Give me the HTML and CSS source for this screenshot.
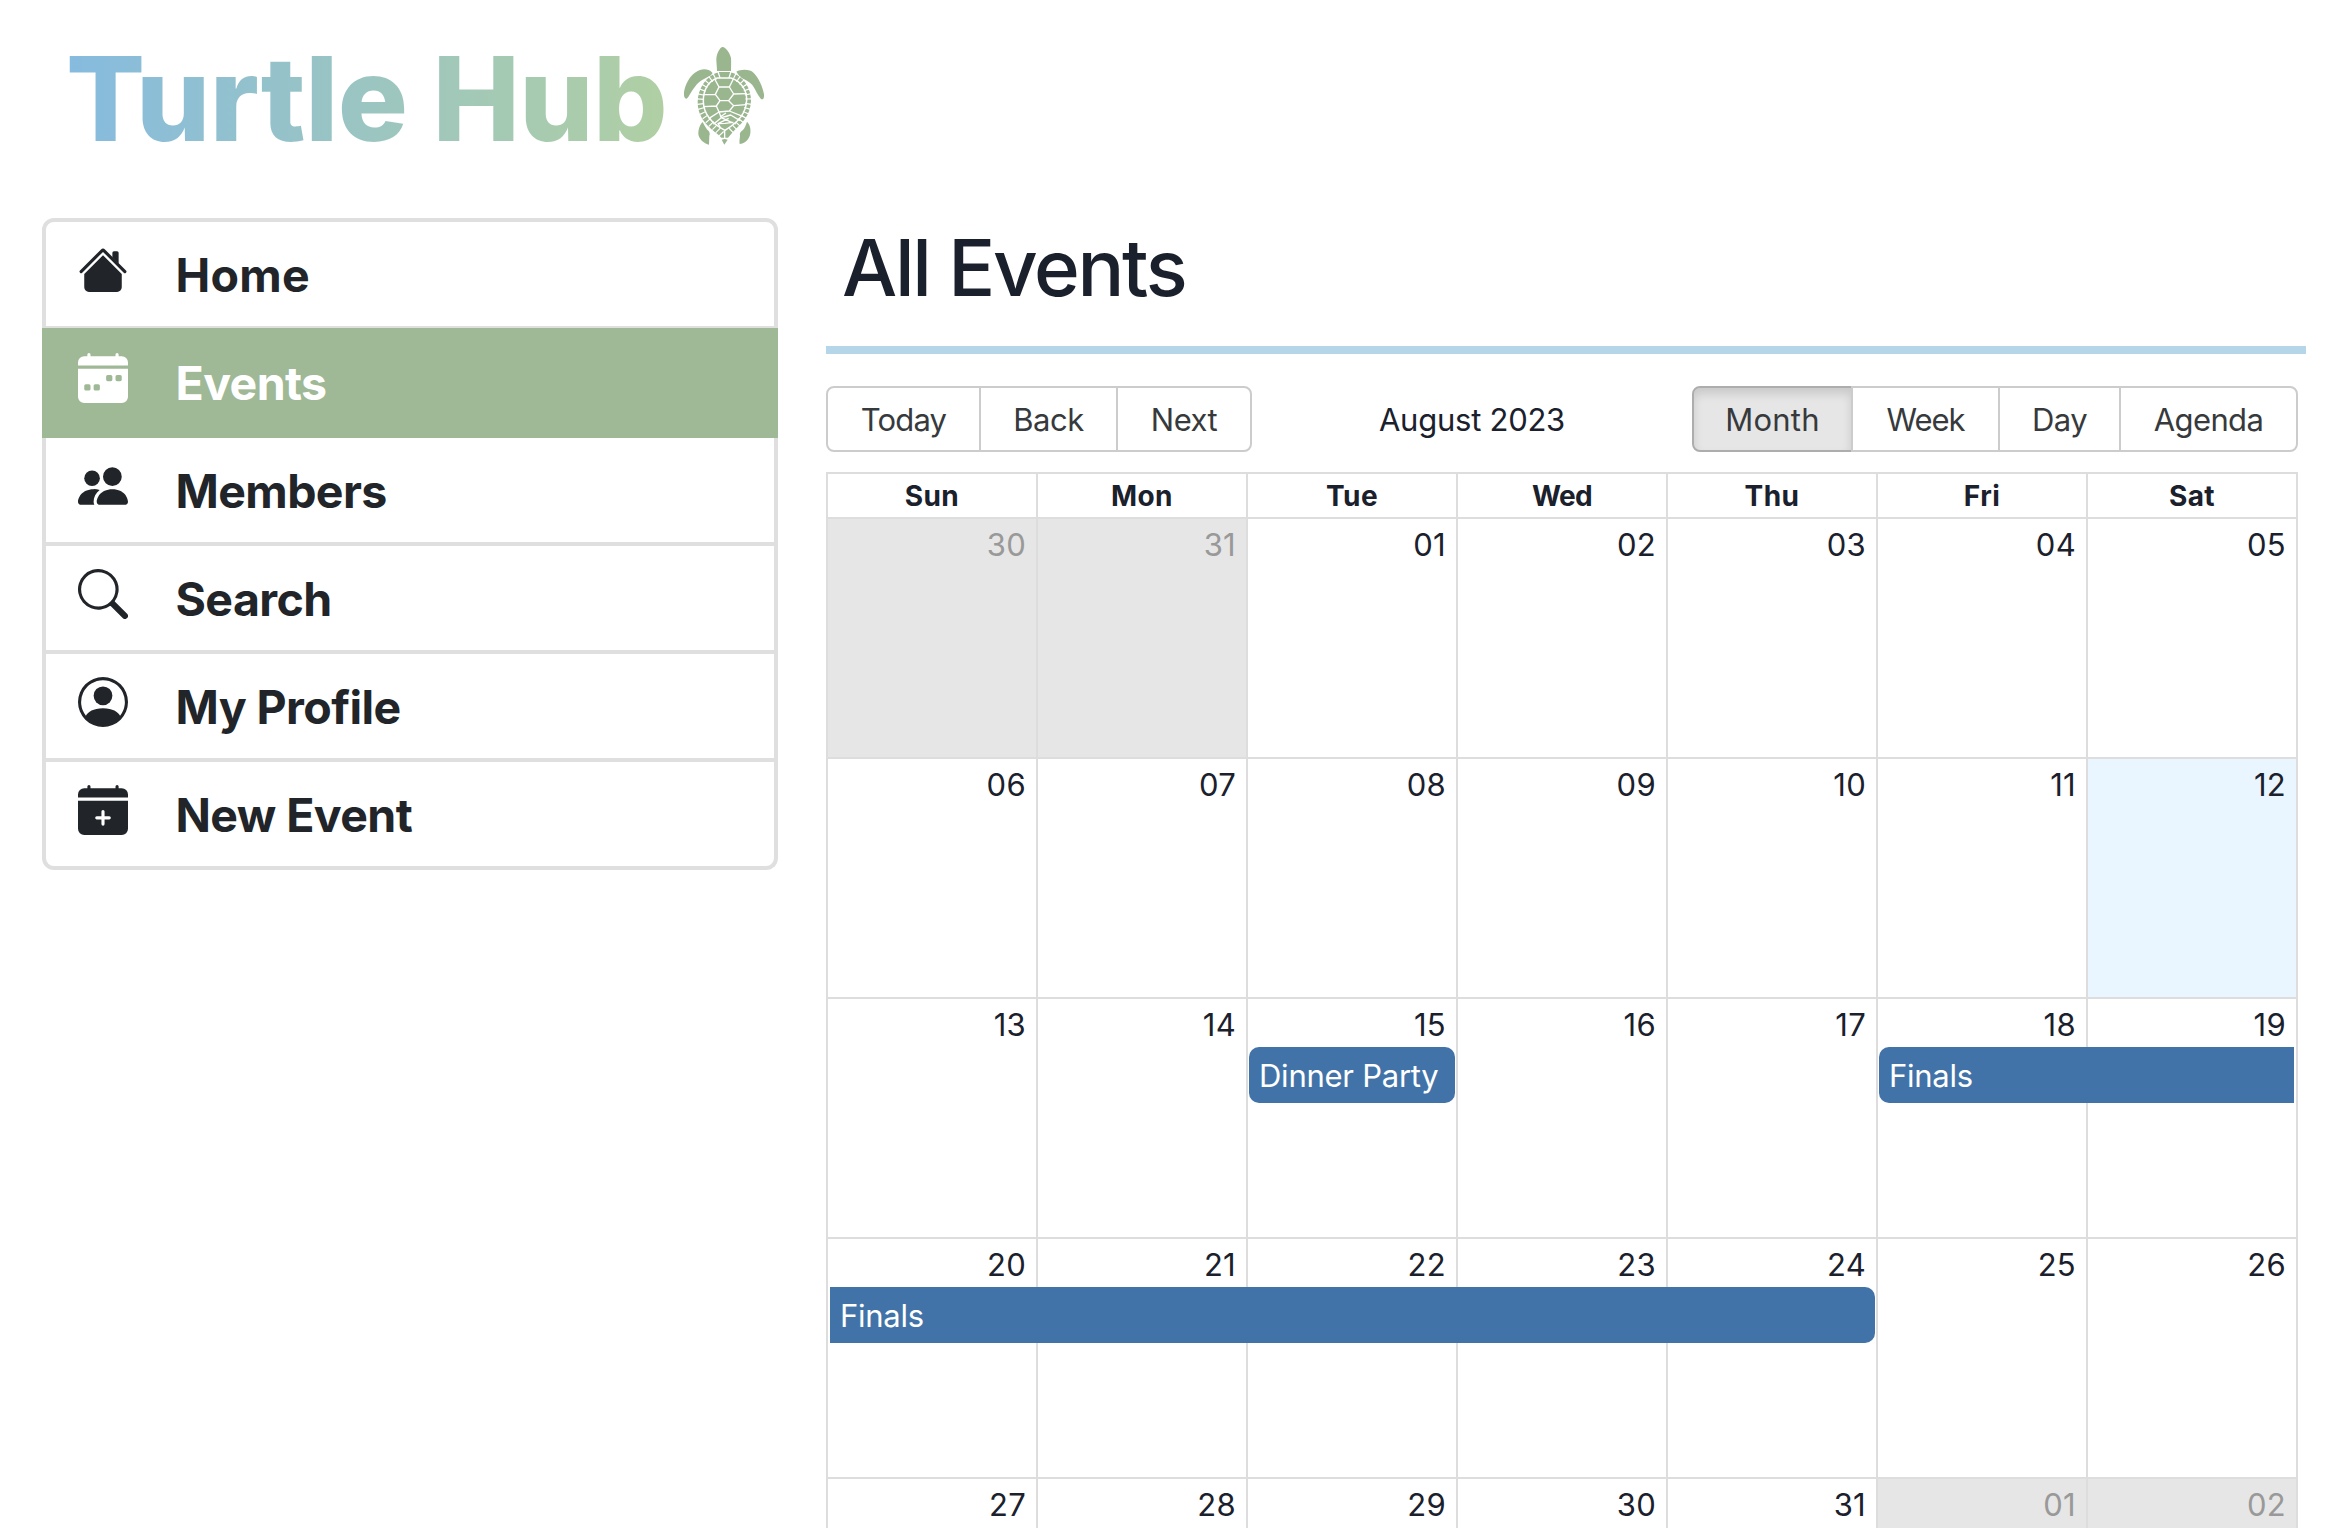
FILE: index.html
```
<!DOCTYPE html>
<html lang="en">
<head>
<meta charset="utf-8">
<title>Turtle Hub</title>
<link rel="stylesheet" href="styles.css">
</head>
<body>
<header class="header">
  <span class="logo-text">Turtle Hub</span>
  <svg class="logo-turtle" viewBox="42 36 240 294" fill="currentColor">
    <path d="M158 36C150 36 140 56 139 72c0 13 2 23 2 36h42c0-13 1-23 0-38-2-15-17-34-25-34z"/>
    <path d="M127 113c-13-13-33-13-50-1-17 10-32 38-35 60-1 13 2 19 7 19 6-1 13-21 26-36 13-17 30-25 43-31 6-4 10-8 9-11z"/>
    <path d="M199 110c13-7 41-9 53 5 14 15 26 40 30 63 1 14-4 17-9 14-11-12-15-27-26-42-12-14-25-16-37-25-5-6-8-11-11-15z"/>
    <path d="M98 261c-10 9-15 29-12 41 4 13 18 23 31 27l1-27c3-4 0-12-2-14-8-6-12-16-18-27z"/>
    <path d="M231 260c9 8 13 25 9 40-5 18-18 25-31 27-2-9 1-19 1-25-2-7 2-12 8-16 7-6 10-18 13-26z"/>
    <path d="M147 111H180C222 123 243 160 243 198C241 243 214 266 192 287L174 308H154L145 299C118 277 83 252 83 200C84 160 108 122 147 111z"/>
    <path d="M155 314l9-2 9 2-10 15z"/>
    <g fill="none" stroke="#fff" stroke-linejoin="round">
      <path stroke-width="20" stroke-dasharray="3.5 10.5" d="M149 119C110 131 91 162 91 200C92 245 125 265 158 301"/>
      <path stroke-width="20" stroke-dasharray="3.5 10.5" d="M178 119C218 131 237 162 236 198C233 243 208 264 177 294"/>
      <path stroke-width="4.5" d="M142 129H183C212 138 231 165 230 195C228 235 207 260 165 286C125 265 101 240 100 200C99 165 115 138 142 129z"/>
      <path stroke-width="4" d="M164 286V312M134 132L147 156H178L190 132M147 156L136 178L150 197H176L191 177L178 156M136 178L100 179M191 177L230 176M150 197L139 213L147 231L178 228L191 212L176 197M139 213L101 215M191 212L229 209M147 231L116 251M178 228L220 245M147 231L154 248L182 240M154 248L130 268M168 234L150 246M166 246L182 240L210 257M154 248L180 260L198 267M176 250L144 266L165 265L190 262M144 266L152 279"/>
    </g>
  </svg>
</header>
<div class="layout">
  <nav class="sidebar">
    <a class="nav-item nav-home"><svg class="icon" viewBox="0 0 16 16" fill="currentColor"><path fill-rule="evenodd" d="m8 3.293 6 6V13.5a1.5 1.5 0 0 1-1.5 1.5h-9A1.5 1.5 0 0 1 2 13.5V9.293l6-6zm5-.793V6l-2-2V2.5a.5.5 0 0 1 .5-.5h1a.5.5 0 0 1 .5.5z"/><path fill-rule="evenodd" d="M7.293 1.5a1 1 0 0 1 1.414 0l6.647 6.646a.5.5 0 0 1-.708.708L8 2.207 1.354 8.854a.5.5 0 1 1-.708-.708L7.293 1.5z"/></svg><span>Home</span></a>
    <a class="nav-item active"><svg class="icon" viewBox="0 0 16 16" fill="currentColor"><path d="M4 .5a.5.5 0 0 0-1 0V1H2a2 2 0 0 0-2 2v1h16V3a2 2 0 0 0-2-2h-1V.5a.5.5 0 0 0-1 0V1H4V.5zM16 14V5H0v9a2 2 0 0 0 2 2h12a2 2 0 0 0 2-2zM9.5 7h1a.5.5 0 0 1 .5.5v1a.5.5 0 0 1-.5.5h-1a.5.5 0 0 1-.5-.5v-1a.5.5 0 0 1 .5-.5zm3 0h1a.5.5 0 0 1 .5.5v1a.5.5 0 0 1-.5.5h-1a.5.5 0 0 1-.5-.5v-1a.5.5 0 0 1 .5-.5zM2 10.5a.5.5 0 0 1 .5-.5h1a.5.5 0 0 1 .5.5v1a.5.5 0 0 1-.5.5h-1a.5.5 0 0 1-.5-.5v-1zm3.5-.5h1a.5.5 0 0 1 .5.5v1a.5.5 0 0 1-.5.5h-1a.5.5 0 0 1-.5-.5v-1a.5.5 0 0 1 .5-.5z"/></svg><span>Events</span></a>
    <a class="nav-item"><svg class="icon" viewBox="0 0 16 16" fill="currentColor"><path d="M7 14s-1 0-1-1 1-4 5-4 5 3 5 4-1 1-1 1H7zm4-6a3 3 0 1 0 0-6 3 3 0 0 0 0 6z"/><path fill-rule="evenodd" d="M5.216 14A2.238 2.238 0 0 1 5 13c0-1.355.68-2.75 1.936-3.72A6.325 6.325 0 0 0 5 9c-4 0-5 3-5 4s1 1 1 1h4.216z"/><path d="M4.5 8a2.5 2.5 0 1 0 0-5 2.5 2.5 0 0 0 0 5z"/></svg><span>Members</span></a>
    <a class="nav-item"><svg class="icon" viewBox="0 0 16 16" fill="currentColor"><path d="M11.742 10.344a6.5 6.5 0 1 0-1.397 1.398h-.001c.03.04.062.078.098.115l3.85 3.85a1 1 0 0 0 1.415-1.414l-3.85-3.85a1.007 1.007 0 0 0-.115-.1zM12 6.5a5.5 5.5 0 1 1-11 0 5.5 5.5 0 0 1 11 0z"/></svg><span>Search</span></a>
    <a class="nav-item"><svg class="icon" viewBox="0 0 16 16" fill="currentColor"><path d="M11 6a3 3 0 1 1-6 0 3 3 0 0 1 6 0z"/><path fill-rule="evenodd" d="M0 8a8 8 0 1 1 16 0A8 8 0 0 1 0 8zm8-7a7 7 0 0 0-5.468 11.37C3.242 11.226 4.805 10 8 10s4.757 1.225 5.468 2.37A7 7 0 0 0 8 1z"/></svg><span>My Profile</span></a>
    <a class="nav-item"><svg class="icon" viewBox="0 0 16 16" fill="currentColor"><path d="M4 .5a.5.5 0 0 0-1 0V1H2a2 2 0 0 0-2 2v1h16V3a2 2 0 0 0-2-2h-1V.5a.5.5 0 0 0-1 0V1H4V.5zM16 14V5H0v9a2 2 0 0 0 2 2h12a2 2 0 0 0 2-2zM8.5 8.5V10H10a.5.5 0 0 1 0 1H8.5v1.5a.5.5 0 0 1-1 0V11H6a.5.5 0 0 1 0-1h1.5V8.5a.5.5 0 0 1 1 0z"/></svg><span>New Event</span></a>
  </nav>
  <main class="main">
    <h1 class="title">All Events</h1>
    <div class="calendar">
      <div class="toolbar">
        <div class="btn-group">
          <button class="btn btn-today">Today</button><button class="btn btn-back">Back</button><button class="btn btn-next">Next</button>
        </div>
        <span class="toolbar-label">August 2023</span>
        <div class="btn-group">
          <button class="btn btn-month pressed">Month</button><button class="btn btn-week">Week</button><button class="btn btn-day">Day</button><button class="btn btn-agenda">Agenda</button>
        </div>
      </div>
      <div class="month">
        <div class="weekdays">
          <div class="weekday">Sun</div><div class="weekday">Mon</div><div class="weekday">Tue</div><div class="weekday tight">Wed</div><div class="weekday">Thu</div><div class="weekday">Fri</div><div class="weekday">Sat</div>
        </div>
        <div class="week">
          <div class="day off">30</div><div class="day off">31</div><div class="day">01</div><div class="day">02</div><div class="day">03</div><div class="day">04</div><div class="day">05</div>
        </div>
        <div class="week">
          <div class="day">06</div><div class="day">07</div><div class="day">08</div><div class="day">09</div><div class="day">10</div><div class="day">11</div><div class="day today">12</div>
        </div>
        <div class="week">
          <div class="day">13</div><div class="day">14</div><div class="day">15</div><div class="day">16</div><div class="day">17</div><div class="day">18</div><div class="day">19</div>
          <div class="event tuesday">Dinner Party</div>
          <div class="event continues-after">Finals</div>
        </div>
        <div class="week">
          <div class="day">20</div><div class="day">21</div><div class="day">22</div><div class="day">23</div><div class="day">24</div><div class="day">25</div><div class="day">26</div>
          <div class="event continues-prior">Finals</div>
        </div>
        <div class="week last">
          <div class="day">27</div><div class="day">28</div><div class="day">29</div><div class="day">30</div><div class="day">31</div><div class="day off">01</div><div class="day off">02</div>
        </div>
      </div>
    </div>
  </main>
</div>
</body>
</html>
```
FILE: styles.css
```
* { box-sizing: border-box; }

body {
  margin: 0;
  height: 1528px;
  overflow: hidden;
  background: #fff;
  color: #1a202c;
  font: 400 31px/1.5 Inter, "Liberation Sans", sans-serif;
  letter-spacing: -0.25px;
}

/* Header */
.header {
  display: flex;
  align-items: flex-start;
  height: 218px;
  padding-left: 66px;
}
.logo-text {
  font-size: 117px;
  font-weight: 800;
  line-height: 197px;
  letter-spacing: -0.6px;
  color: transparent;
  background: linear-gradient(90deg, #86bbdf, #b0cfa3);
  background-clip: text;
  -webkit-background-clip: text;
}
.logo-turtle {
  width: 80px;
  height: 98px;
  margin: 47px 0 0 17px;
  color: #9ab68f;
}

.layout {
  display: flex;
  align-items: flex-start;
  gap: 48px;
  padding-left: 42px;
}

/* Sidebar */
.sidebar {
  display: flex;
  flex-direction: column;
  width: 736px;
  color: #212529;
  font-size: 46.5px;
  font-weight: 700;
  letter-spacing: -0.6px;
}
.nav-item {
  display: flex;
  align-items: flex-start;
  gap: 47.5px;
  height: 108px;
  padding: 23px 32px 0;
  border: solid #dfdfdf;
  border-width: 0 4px 4px;
  line-height: 60px;
}
.nav-home {
  height: 110px;
  border-width: 4px 4px 2px;
  border-radius: 12px 12px 0 0;
  letter-spacing: 0.3px;
}
.nav-item:last-child { border-radius: 0 0 12px 12px; }
.nav-item.active {
  height: 110px;
  padding: 25px 36px 0;
  border: 0;
  background: #9fb896;
  color: #fff;
}
.icon {
  flex: none;
  width: 50px;
  height: 50px;
}

/* Main column */
.main { width: 1480px; }
.title {
  height: 136px;
  margin: 0;
  padding-left: 16px;
  border-bottom: 8px solid #b5d6e8;
  font-size: 78px;
  font-weight: 500;
  line-height: 100px;
  letter-spacing: -2.3px;
}
.calendar {
  width: 1472px;
  padding-top: 32px;
}

/* Toolbar */
.toolbar {
  display: flex;
  justify-content: space-between;
  align-items: center;
  height: 66px;
  margin-bottom: 20px;
}
.toolbar-label { padding-top: 2px; }
.btn-group { display: flex; }
.btn {
  height: 66px;
  margin: 0;
  padding: 3px 0 0;
  border: 2px solid #ccc;
  background: none;
  color: #373a3c;
  font: inherit;
  letter-spacing: -0.5px;
}
.btn + .btn { margin-left: -2px; }
.btn:first-child { border-radius: 8px 0 0 8px; }
.btn:last-child { border-radius: 0 8px 8px 0; }
.btn-today { width: 155px; letter-spacing: -0.85px; }
.btn-back { width: 139px; }
.btn-next { width: 136px; }
.btn-month { width: 161px; letter-spacing: 0.2px; }
.btn-week { width: 149px; letter-spacing: -1px; }
.btn-day { width: 123px; }
.btn-agenda { width: 179px; letter-spacing: -0.65px; }
.btn.pressed {
  border-color: #adadad;
  background: #e6e6e6;
  box-shadow: inset 0 6px 10px rgba(0, 0, 0, 0.125);
}

/* Month grid */
.month {
  border-top: 2px solid #ddd;
  border-right: 2px solid #ddd;
}
.weekdays,
.week {
  display: grid;
  grid-template-columns: repeat(7, 210px);
}
.weekdays { height: 43px; }
.weekday {
  border-left: 2px solid #ddd;
  font-size: 28px;
  font-weight: 700;
  line-height: 45px;
  letter-spacing: 0.4px;
  text-align: center;
}
.weekday.tight { letter-spacing: -0.6px; }
.week {
  grid-template-rows: 48px 56px 1fr;
  height: 240px;
  border-top: 2px solid #ddd;
}
.week.last { height: 51px; }
.week.last .day { grid-row: 1; }
.day {
  grid-row: 1 / 4;
  padding-right: 10px;
  border-left: 2px solid #ddd;
  line-height: 51px;
  letter-spacing: 0.3px;
  text-align: right;
}
.week.last { grid-template-rows: 49px; }
.week.last .day { overflow: hidden; }
.week .day:nth-child(1) { grid-column: 1; }
.week .day:nth-child(2) { grid-column: 2; }
.week .day:nth-child(3) { grid-column: 3; }
.week .day:nth-child(4) { grid-column: 4; }
.week .day:nth-child(5) { grid-column: 5; }
.week .day:nth-child(6) { grid-column: 6; }
.week .day:nth-child(7) { grid-column: 7; }
.day.off { background: #e6e6e6; color: #999; }
.day.today { background: #eaf6ff; }

.event {
  grid-row: 2;
  z-index: 1;
  padding-left: 10px;
  border-radius: 10px;
  background: #4173a8;
  color: #fff;
  line-height: 58px;
}
.event.tuesday {
  grid-column: 3;
  height: 56px;
  margin: 0 1px 0 3px;
}
.event.continues-after {
  grid-column: 6 / 8;
  height: 56px;
  margin: 0 2px 0 3px;
  border-radius: 10px 0 0 10px;
}
.event.continues-prior {
  grid-column: 1 / 6;
  height: 56px;
  margin: 0 1px 0 4px;
  border-radius: 0 10px 10px 0;
}
```
